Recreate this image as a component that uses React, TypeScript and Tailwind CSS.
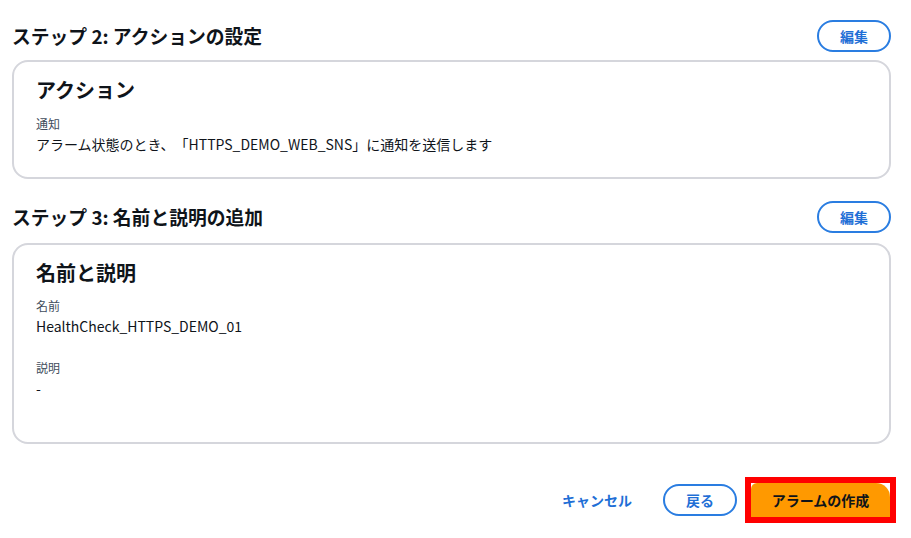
import React from 'react';

const font = { fontFamily: '"Noto Sans CJK JP", "Noto Sans", sans-serif' };

function EditButton() {
  return (
    <button className="h-[32px] w-[74px] rounded-full border-2 border-[#2a7de1] bg-white text-[14px] font-bold text-[#1f6fd6]">
      編集
    </button>
  );
}

function StepHeader({ title }: { title: string }) {
  return (
    <div className="flex h-[32px] items-center justify-between">
      <h2 className="text-[18.8px] font-bold leading-[28px] text-[#0f141a]">{title}</h2>
      <EditButton />
    </div>
  );
}

function Field({ label, value, className = '' }: { label: string; value: string; className?: string }) {
  return (
    <div className={className}>
      <div className="text-[12px] leading-[20px] text-[#414d5c]">{label}</div>
      <div className="text-[14px] leading-[20px] text-[#0f141a]">{value}</div>
    </div>
  );
}

export default function App() {
  return (
    <div className="min-h-[538px] w-[911px] bg-white [text-spacing-trim:space-all]" style={font}>
      <div className="pl-[12px] pr-[20px] pt-[20px]">
        <StepHeader title="ステップ 2: アクションの設定" />
        <div className="mt-[8px] rounded-[16px] border-2 border-[#d5d6dc] pb-[23px] pl-[22px] pr-[22px] pt-[14px]">
          <h3 className="text-[20px] font-bold leading-[28px] text-[#0f141a]">アクション</h3>
          <Field
            className="mt-[10px]"
            label="通知"
            value="アラーム状態のとき、「HTTPS_DEMO_WEB_SNS」に通知を送信します"
          />
        </div>

        <div className="mt-[22px]">
          <StepHeader title="ステップ 3: 名前と説明の追加" />
        </div>
        <div className="mt-[10px] rounded-[16px] border-2 border-[#d5d6dc] pb-[44px] pl-[22px] pr-[22px] pt-[14px]">
          <h3 className="text-[20px] font-bold leading-[28px] text-[#0f141a]">名前と説明</h3>
          <Field className="mt-[9px]" label="名前" value="HealthCheck_HTTPS_DEMO_01" />
          <Field className="mt-[22px]" label="説明" value="-" />
        </div>
      </div>

      <div className="mt-[33px] flex items-center justify-end pr-[15px]">
        <button className="text-[14px] font-bold text-[#1f6fd6]">キャンセル</button>
        <button className="ml-[31px] h-[32px] w-[74px] rounded-full border-2 border-[#2a7de1] bg-white text-[14px] font-bold text-[#1f6fd6]">
          戻る
        </button>
        <div className="ml-[8px] border-[6px] border-[#ff0000]">
          <button className="flex h-[34px] w-[139px] items-center justify-center rounded-tl-[6px] rounded-tr-[14px] bg-[#ff9900] text-[14px] font-bold text-[#0f141a]">
            アラームの作成
          </button>
        </div>
      </div>
    </div>
  );
}
